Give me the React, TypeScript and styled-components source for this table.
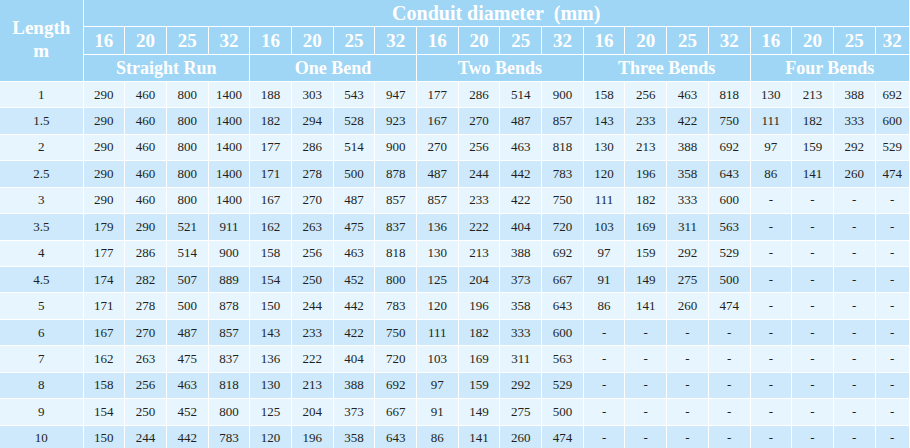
import styled, { createGlobalStyle } from "styled-components";

const GlobalStyle = createGlobalStyle`
  html, body {
    margin: 0;
    padding: 0;
    background: #ffffff;
    overflow: hidden;
    font-family: "Liberation Serif", "DejaVu Serif", "Times New Roman", serif;
  }
`;

const FONT = `"Liberation Serif", "DejaVu Serif", "Times New Roman", serif`;

const SIZES = ["16", "20", "25", "32"];
const GROUPS = ["Straight Run", "One Bend", "Two Bends", "Three Bends", "Four Bends"];

const D = ["-", "-", "-", "-"];

type Row = { length: string; values: string[] };

const ROWS: Row[] = [
  { length: "1", values: ["290", "460", "800", "1400", "188", "303", "543", "947", "177", "286", "514", "900", "158", "256", "463", "818", "130", "213", "388", "692"] },
  { length: "1.5", values: ["290", "460", "800", "1400", "182", "294", "528", "923", "167", "270", "487", "857", "143", "233", "422", "750", "111", "182", "333", "600"] },
  { length: "2", values: ["290", "460", "800", "1400", "177", "286", "514", "900", "270", "256", "463", "818", "130", "213", "388", "692", "97", "159", "292", "529"] },
  { length: "2.5", values: ["290", "460", "800", "1400", "171", "278", "500", "878", "487", "244", "442", "783", "120", "196", "358", "643", "86", "141", "260", "474"] },
  { length: "3", values: ["290", "460", "800", "1400", "167", "270", "487", "857", "857", "233", "422", "750", "111", "182", "333", "600", ...D] },
  { length: "3.5", values: ["179", "290", "521", "911", "162", "263", "475", "837", "136", "222", "404", "720", "103", "169", "311", "563", ...D] },
  { length: "4", values: ["177", "286", "514", "900", "158", "256", "463", "818", "130", "213", "388", "692", "97", "159", "292", "529", ...D] },
  { length: "4.5", values: ["174", "282", "507", "889", "154", "250", "452", "800", "125", "204", "373", "667", "91", "149", "275", "500", ...D] },
  { length: "5", values: ["171", "278", "500", "878", "150", "244", "442", "783", "120", "196", "358", "643", "86", "141", "260", "474", ...D] },
  { length: "6", values: ["167", "270", "487", "857", "143", "233", "422", "750", "111", "182", "333", "600", ...D, ...D] },
  { length: "7", values: ["162", "263", "475", "837", "136", "222", "404", "720", "103", "169", "311", "563", ...D, ...D] },
  { length: "8", values: ["158", "256", "463", "818", "130", "213", "388", "692", "97", "159", "292", "529", ...D, ...D] },
  { length: "9", values: ["154", "250", "452", "800", "125", "204", "373", "667", "91", "149", "275", "500", ...D, ...D] },
  { length: "10", values: ["150", "244", "442", "783", "120", "196", "358", "643", "86", "141", "260", "474", ...D, ...D] },
];

export default function App() {
  return (
    <>
      <GlobalStyle />
      <Table>
        <colgroup>
          <LengthCol />
          {Array.from({ length: 19 }).map((_, i) => (
            <ValueCol key={i} />
          ))}
          <col />
        </colgroup>
        <thead>
          <tr>
            <LengthHead rowSpan={3}>
              Length
              <br />m
            </LengthHead>
            <TitleHead colSpan={20}>Conduit diameter&nbsp; (mm)</TitleHead>
          </tr>
          <tr>
            {GROUPS.map((g) =>
              SIZES.map((s) => <SizeHead key={g + s}>{s}</SizeHead>)
            )}
          </tr>
          <tr>
            {GROUPS.map((g) => (
              <GroupHead key={g} colSpan={4}>
                {g}
              </GroupHead>
            ))}
          </tr>
        </thead>
        <tbody>
          {ROWS.map((row, i) => (
            <tr key={row.length}>
              <Cell $shade={i % 2 === 1}>{row.length}</Cell>
              {row.values.map((v, j) => (
                <Cell key={j} $shade={i % 2 === 1}>
                  {v}
                </Cell>
              ))}
            </tr>
          ))}
        </tbody>
      </Table>
    </>
  );
}

const Table = styled.table`
  width: 910px;
  table-layout: fixed;
  border-collapse: separate;
  border-spacing: 0;
  font-family: ${FONT};
`;

const LengthCol = styled.col`
  width: 83.5px;
`;

const ValueCol = styled.col`
  width: 41.7px;
`;

const HeadBase = styled.th`
  box-sizing: border-box;
  padding: 0;
  background: #9fd6f5;
  color: #ffffff;
  font-family: ${FONT};
  font-weight: bold;
  text-align: center;
  vertical-align: middle;
  border-right: 1.6px solid #ffffff;
  border-bottom: 1.6px solid #ffffff;
  white-space: nowrap;
  overflow: hidden;
`;

const LengthHead = styled(HeadBase)`
  font-size: 19px;
  line-height: 23px;
  padding-bottom: 2px;
`;

const TitleHead = styled(HeadBase)`
  height: 27.3px;
  font-size: 20px;
  line-height: 20px;
`;

const SizeHead = styled(HeadBase)`
  height: 27.3px;
  font-size: 19px;
  line-height: 20px;
  padding-top: 1px;
`;

const GroupHead = styled(HeadBase)`
  height: 27.3px;
  font-size: 18px;
  line-height: 20px;
`;

const Cell = styled.td<{ $shade: boolean }>`
  box-sizing: border-box;
  height: 26.45px;
  padding: 0;
  background: ${(p) => (p.$shade ? "#cde9fb" : "#e7f5fe")};
  color: #231f20;
  font-family: ${FONT};
  font-size: 13px;
  line-height: 16px;
  text-align: center;
  vertical-align: middle;
  border-right: 1.6px solid #ffffff;
  border-bottom: 1.6px solid #ffffff;
  white-space: nowrap;
  overflow: hidden;
`;
